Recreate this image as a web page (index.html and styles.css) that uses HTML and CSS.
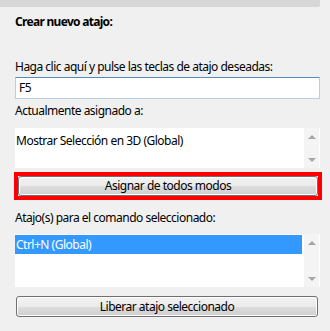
FILE: index.html
```html
<!DOCTYPE html>
<html>
<head>
  <title>Crear nuevo atajo</title>
  <link rel="stylesheet" href="styles.css">
</head>
<body>
  <div class="topbar"></div>
  <div class="panel">
    <div class="heading">Crear nuevo atajo:</div>

    <div class="label first">Haga clic aquí y pulse las teclas de atajo deseadas:</div>
    <div class="keybox">F5</div>

    <div class="label">Actualmente asignado a:</div>
    <div class="listbox current">
      <div class="items">
        <div class="item">Mostrar Selección en 3D (Global)</div>
      </div>
      <div class="scroll">
        <span class="arrow up"></span>
        <span class="arrow down"></span>
      </div>
    </div>

    <div class="highlight">
      <button class="btn">Asignar de todos modos</button>
    </div>

    <div class="label shortcuts">Atajo(s) para el comando seleccionado:</div>
    <div class="listbox assigned">
      <div class="items">
        <div class="item selected">Ctrl+N (Global)</div>
      </div>
      <div class="scroll">
        <span class="arrow up"></span>
        <span class="arrow down"></span>
      </div>
    </div>

    <button class="btn release">Liberar atajo seleccionado</button>
  </div>
</body>
</html>
```

FILE: styles.css
```css
body {
  margin: 0;
  background-color: #f0f0f0;
  font-family: "Noto Sans", "Open Sans", sans-serif;
  font-size: 12px;
  line-height: 16px;
  letter-spacing: -0.5px;
  color: #000000;
}

.topbar {
  width: 320px;
  height: 7px;
  background-color: #d7d7d7;
  border-bottom-right-radius: 2px;
}

.panel {
  width: 305px;
  margin-left: 15px;
}

.heading {
  margin-top: 7px;
  font-weight: bold;
  letter-spacing: -0.7px;
}

.label {
  margin-top: 4px;
}

.label.first {
  margin-top: 29px;
}

.label.shortcuts {
  margin-top: 10px;
}

.keybox {
  margin-top: 2px;
  box-sizing: border-box;
  height: 22px;
  padding: 2px 0 0 3px;
  background-color: #ffffff;
  border: 1px solid #b6d0e8;
  border-top-color: #5b8bbd;
}

.listbox {
  display: flex;
  background-color: #ffffff;
}

.listbox.current {
  margin-top: 9px;
  height: 40px;
}

.listbox.assigned {
  margin-top: 8px;
  height: 53px;
}

.items {
  flex: 1;
  padding-top: 1px;
}

.item {
  height: 19px;
  line-height: 19px;
  padding-left: 1px;
}

.current .item {
  padding-top: 2px;
}

.item.selected {
  background-color: #3399ff;
  color: #ffffff;
}

.scroll {
  width: 15px;
  margin-left: 2px;
  margin-right: 1px;
  background-color: #f4f4f4;
  display: flex;
  flex-direction: column;
  justify-content: space-between;
  align-items: center;
  padding: 7px 0 6px;
  box-sizing: border-box;
}

.arrow {
  width: 0;
  height: 0;
  border-left: 4px solid transparent;
  border-right: 4px solid transparent;
}

.arrow.up {
  border-bottom: 4px solid #a6a6a6;
}

.arrow.down {
  border-top: 4px solid #a6a6a6;
}

.highlight {
  margin-top: 4px;
  margin-left: -1px;
  width: 308px;
  height: 28px;
  box-sizing: border-box;
  border: 4px solid #ff0000;
}

.btn {
  display: block;
  width: 100%;
  height: 20px;
  margin: 0;
  padding: 0;
  font-family: inherit;
  font-size: 12px;
  line-height: 16px;
  letter-spacing: -0.5px;
  color: #000000;
  border: 1px solid #707070;
  border-radius: 3px;
  background: linear-gradient(#f2f2f2 0%, #ebebeb 50%, #dddddd 51%, #cfcfcf 100%);
  box-shadow: inset 0 0 0 1px #fcfcfc;
}

.btn.release {
  margin-top: 9px;
  margin-left: 1px;
  width: 302px;
  height: 21px;
}
```
